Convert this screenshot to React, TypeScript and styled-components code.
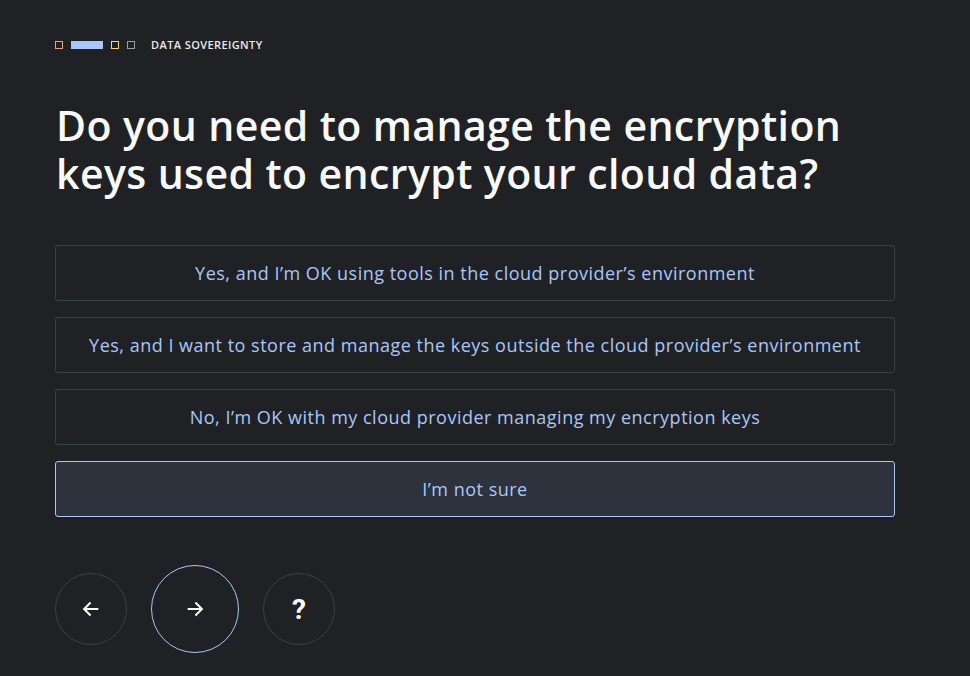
import styled, { createGlobalStyle } from "styled-components";

const GlobalStyle = createGlobalStyle`
  html, body {
    margin: 0;
    padding: 0;
    background: #202124;
  }
  body {
    font-family: "Open Sans", "Noto Sans", sans-serif;
  }
`;

const Page = styled.div`
  width: 970px;
  height: 676px;
  box-sizing: border-box;
  padding: 41px 75px 0 55px;
  background: #202124;
  display: flex;
  flex-direction: column;
`;

const Progress = styled.div`
  display: flex;
  align-items: center;
  gap: 8px;
  height: 8px;
`;

const Step = styled.span<{ $color: string; $active?: boolean }>`
  box-sizing: border-box;
  width: ${(p) => (p.$active ? "32px" : "8px")};
  height: 8px;
  border: 1px solid ${(p) => p.$color};
  background: ${(p) => (p.$active ? p.$color : "transparent")};
`;

const Section = styled.span`
  margin-left: 8px;
  color: #e8eaed;
  font-size: 11px;
  font-weight: 600;
  letter-spacing: 0.4px;
  line-height: 8px;
`;

const Question = styled.h1`
  margin: 52px 0 0 1px;
  color: #f8f9fa;
  font-family: "Open Sans", sans-serif;
  font-size: 41px;
  font-weight: 600;
  line-height: 48px;
  letter-spacing: 0.4px;
`;

const Options = styled.div`
  margin-top: 48px;
  display: flex;
  flex-direction: column;
  gap: 16px;
`;

const Option = styled.button<{ $selected?: boolean }>`
  box-sizing: border-box;
  width: 100%;
  height: 56px;
  border-radius: 3px;
  border: 1px solid ${(p) => (p.$selected ? "#a8c7fa" : "#3c4043")};
  background: ${(p) => (p.$selected ? "#2d323d" : "transparent")};
  color: #a8c7fa;
  font-family: "Open Sans", sans-serif;
  font-size: 18px;
  font-weight: 500;
  letter-spacing: 0.5px;
  cursor: pointer;
`;

const Nav = styled.div`
  margin-top: 48px;
  display: flex;
  align-items: center;
  gap: 24px;
`;

const Round = styled.button<{ $primary?: boolean }>`
  box-sizing: border-box;
  width: ${(p) => (p.$primary ? "88px" : "72px")};
  height: ${(p) => (p.$primary ? "88px" : "72px")};
  border-radius: 50%;
  border: 1px solid ${(p) => (p.$primary ? "#a8c7fa" : "#3c4043")};
  background: transparent;
  color: #ffffff;
  display: flex;
  align-items: center;
  justify-content: center;
  padding: 0;
  font-family: "Roboto", sans-serif;
  font-size: 28px;
  font-weight: 700;
  cursor: pointer;
`;

const Arrow = ({ dir }: { dir: "left" | "right" }) => (
  <svg width="22" height="22" viewBox="0 0 24 24" fill="none">
    <path
      d={dir === "left" ? "M20 12H5M11.5 5l-7 7 7 7" : "M4 12h15M12.5 5l7 7-7 7"}
      stroke="#fff"
      strokeWidth="2.2"
      strokeLinejoin="miter"
    />
  </svg>
);

const options = [
  "Yes, and I’m OK using tools in the cloud provider’s environment",
  "Yes, and I want to store and manage the keys outside the cloud provider’s environment",
  "No, I’m OK with my cloud provider managing my encryption keys",
  "I’m not sure",
];

export default function App() {
  return (
    <>
      <GlobalStyle />
      <Page>
        <Progress>
          <Step $color="#ee9c82" />
          <Step $color="#a8c7fa" $active />
          <Step $color="#fdd663" />
          <Step $color="#9aa0a6" />
          <Section>DATA SOVEREIGNTY</Section>
        </Progress>
        <Question>
          Do you need to manage the encryption
          <br />
          keys used to encrypt your cloud data?
        </Question>
        <Options>
          {options.map((o, i) => (
            <Option key={o} $selected={i === 3}>
              {o}
            </Option>
          ))}
        </Options>
        <Nav>
          <Round aria-label="Back">
            <Arrow dir="left" />
          </Round>
          <Round $primary aria-label="Next">
            <Arrow dir="right" />
          </Round>
          <Round aria-label="Help">?</Round>
        </Nav>
      </Page>
    </>
  );
}
